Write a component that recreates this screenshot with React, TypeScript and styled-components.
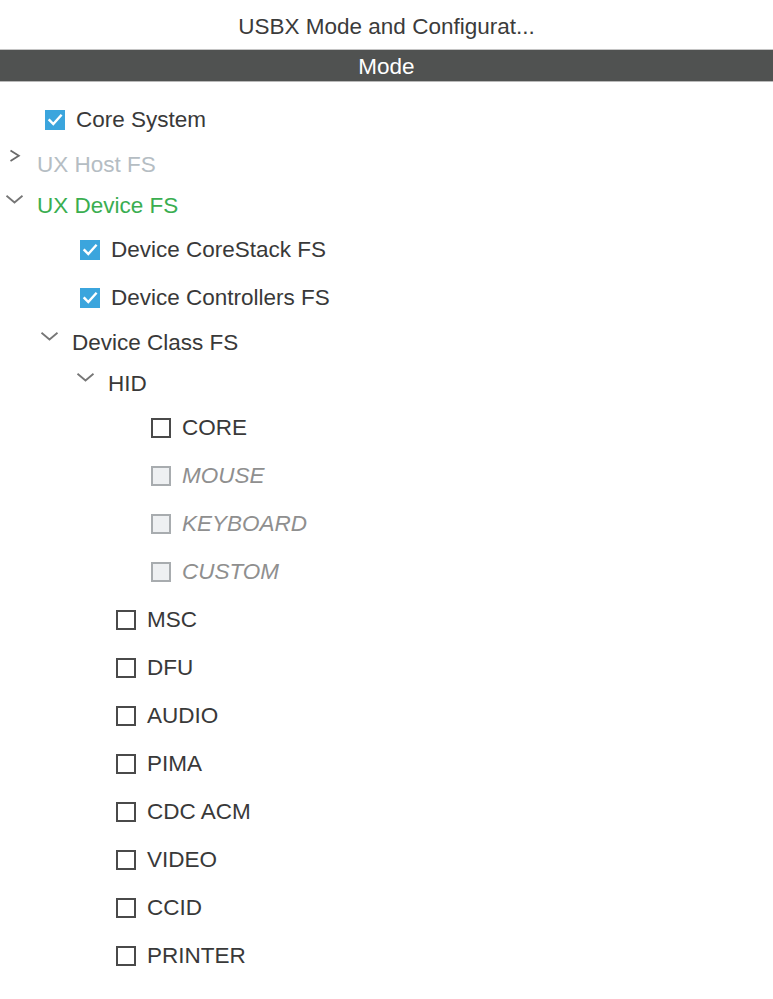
import React from "react";
import styled, { createGlobalStyle, css } from "styled-components";

const GlobalStyle = createGlobalStyle`
  html, body {
    margin: 0;
    padding: 0;
    background: #ffffff;
  }
  body {
    font-family: "Liberation Sans", Arial, sans-serif;
  }
`;

const Page = styled.div`
  width: 773px;
  min-height: 999px;
  background: #ffffff;
  display: flex;
  flex-direction: column;
`;

const Title = styled.div`
  height: 49px;
  display: flex;
  align-items: center;
  justify-content: center;
  font-size: 22.5px;
  color: #3b3b3b;
  padding-top: 5px;
  box-sizing: border-box;
`;

const ModeBar = styled.div`
  height: 33px;
  box-sizing: border-box;
  background: #505251;
  border-top: 1px solid #c4c4c4;
  border-bottom: 1px solid #b9b9b9;
  color: #ffffff;
  font-size: 22.5px;
  padding-top: 3px;
  display: flex;
  align-items: center;
  justify-content: center;
`;

const Tree = styled.div`
  display: flex;
  flex-direction: column;
  padding-top: 14px;
`;

type Tone = "normal" | "muted" | "active" | "disabled";

const Row = styled.div<{ $level: number; $leaf: boolean }>`
  display: flex;
  align-items: center;
  height: ${(p) => (p.$leaf ? 48 : 41)}px;
  padding-left: ${(p) => Math.floor(p.$level * 35.5) + 5}px;
  box-sizing: border-box;
`;

const Label = styled.span<{ $tone: Tone }>`
  font-size: 22.5px;
  white-space: nowrap;
  color: #393939;
  ${(p) =>
    p.$tone === "muted" &&
    css`
      color: #b5bdc3;
    `}
  ${(p) =>
    p.$tone === "active" &&
    css`
      color: #3aae50;
    `}
  ${(p) =>
    p.$tone === "disabled" &&
    css`
      color: #8f8f8f;
      font-style: italic;
    `}
`;

const ToggleIcon = styled.svg`
  width: 32px;
  height: 41px;
  flex: none;
  align-self: flex-start;
`;

const LeafSpacer = styled.span`
  width: 40px;
  flex: none;
`;

const Box = styled.span<{ $state: "checked" | "unchecked" | "disabled" }>`
  width: 20px;
  height: 20px;
  box-sizing: border-box;
  flex: none;
  margin-right: 11px;
  display: flex;
  align-items: center;
  justify-content: center;
  ${(p) =>
    p.$state === "checked" &&
    css`
      background: #3ba5dd;
    `}
  ${(p) =>
    p.$state === "unchecked" &&
    css`
      background: #ffffff;
      border: 2px solid #4a4a4a;
    `}
  ${(p) =>
    p.$state === "disabled" &&
    css`
      background: #eef0f2;
      border: 2px solid #a8acaf;
    `}
`;

const CheckMark = () => (
  <svg width="20" height="20" viewBox="0 0 20 20">
    <path
      d="M4.5 10.2 L8.3 14 L15.8 5.6"
      fill="none"
      stroke="#ffffff"
      strokeWidth="2.4"
      strokeLinecap="square"
    />
  </svg>
);

const Chevron = ({ open }: { open: boolean }) => (
  <ToggleIcon viewBox="0 0 32 41">
    {open ? (
      <path
        d="M1.5 10.8 L9.5 17.5 L17.5 10.8"
        fill="none"
        stroke="#767676"
        strokeWidth="1.8"
      />
    ) : (
      <path
        d="M5.5 6.5 L13.8 11.8 L5.5 17"
        fill="none"
        stroke="#6a6a6a"
        strokeWidth="1.8"
      />
    )}
  </ToggleIcon>
);

type Item =
  | { kind: "node"; level: number; label: string; open: boolean; tone: Tone }
  | {
      kind: "leaf";
      level: number;
      label: string;
      state: "checked" | "unchecked" | "disabled";
    };

const items: Item[] = [
  { kind: "leaf", level: 0, label: "Core System", state: "checked" },
  { kind: "node", level: 0, label: "UX Host FS", open: false, tone: "muted" },
  { kind: "node", level: 0, label: "UX Device FS", open: true, tone: "active" },
  { kind: "leaf", level: 1, label: "Device CoreStack FS", state: "checked" },
  { kind: "leaf", level: 1, label: "Device Controllers FS", state: "checked" },
  { kind: "node", level: 1, label: "Device Class FS", open: true, tone: "normal" },
  { kind: "node", level: 2, label: "HID", open: true, tone: "normal" },
  { kind: "leaf", level: 3, label: "CORE", state: "unchecked" },
  { kind: "leaf", level: 3, label: "MOUSE", state: "disabled" },
  { kind: "leaf", level: 3, label: "KEYBOARD", state: "disabled" },
  { kind: "leaf", level: 3, label: "CUSTOM", state: "disabled" },
  { kind: "leaf", level: 2, label: "MSC", state: "unchecked" },
  { kind: "leaf", level: 2, label: "DFU", state: "unchecked" },
  { kind: "leaf", level: 2, label: "AUDIO", state: "unchecked" },
  { kind: "leaf", level: 2, label: "PIMA", state: "unchecked" },
  { kind: "leaf", level: 2, label: "CDC ACM", state: "unchecked" },
  { kind: "leaf", level: 2, label: "VIDEO", state: "unchecked" },
  { kind: "leaf", level: 2, label: "CCID", state: "unchecked" },
  { kind: "leaf", level: 2, label: "PRINTER", state: "unchecked" },
];

export default function App() {
  return (
    <Page>
      <GlobalStyle />
      <Title>USBX Mode and Configurat...</Title>
      <ModeBar>Mode</ModeBar>
      <Tree>
        {items.map((it) =>
          it.kind === "node" ? (
            <Row key={it.label} $level={it.level} $leaf={false}>
              <Chevron open={it.open} />
              <Label $tone={it.tone}>{it.label}</Label>
            </Row>
          ) : (
            <Row key={it.label} $level={it.level} $leaf={true}>
              <LeafSpacer />
              <Box $state={it.state}>{it.state === "checked" && <CheckMark />}</Box>
              <Label $tone={it.state === "disabled" ? "disabled" : "normal"}>
                {it.label}
              </Label>
            </Row>
          )
        )}
      </Tree>
    </Page>
  );
}
